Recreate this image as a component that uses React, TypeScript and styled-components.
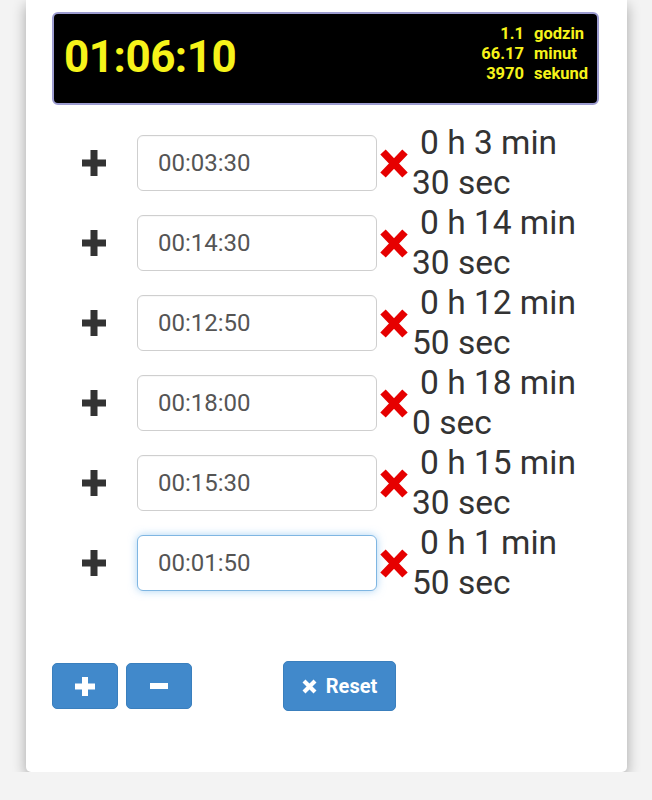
import React from "react";
import styled, { createGlobalStyle } from "styled-components";

const Global = createGlobalStyle`
  html, body { margin: 0; padding: 0; background: #f3f3f3; }
  body { font-family: Roboto, "Liberation Sans", Arial, sans-serif; }
  * { box-sizing: border-box; }
`;

const Card = styled.div`
  margin-left: 26px;
  width: 601px;
  height: 772px;
  background: #fff;
  border-radius: 0 0 5px 5px;
  box-shadow: 0 5px 14px rgba(0, 0, 0, 0.32);
  padding: 12px 0 0 0;
  display: flex;
  flex-direction: column;
`;

const Display = styled.div`
  margin-left: 26px;
  width: 547px;
  height: 93px;
  background: #000;
  border: 2px solid #9c9cd0;
  border-radius: 6px;
  display: flex;
  align-items: center;
  justify-content: space-between;
  padding: 0 9px 0 10px;
`;

const BigTime = styled.div`
  color: #f6f31a;
  font-size: 44px;
  font-weight: 700;
  letter-spacing: -0.5px;
  margin-bottom: 4px;
`;

const Stats = styled.div`
  display: grid;
  grid-template-columns: auto auto;
  column-gap: 10px;
  color: #f6f31a;
  font-size: 16.5px;
  font-weight: 700;
  line-height: 20px;
  margin-bottom: 10px;
`;

const Num = styled.span`
  text-align: right;
`;

const Rows = styled.div`
  margin-top: 18px;
  display: flex;
  flex-direction: column;
`;

const Row = styled.div`
  display: flex;
  align-items: center;
  height: 80px;
  padding-left: 56px;
`;

const PlusIcon = styled.svg`
  width: 24px;
  height: 26px;
  margin-right: 31px;
  flex: none;
`;

const TimeInput = styled.input<{ $focused?: boolean }>`
  width: 240px;
  height: 56px;
  border: 1px solid ${(p) => (p.$focused ? "#7fb6e2" : "#cfcfcf")};
  border-radius: 6px;
  padding: 0 0 0 20px;
  font-family: Roboto, "Liberation Sans", Arial, sans-serif;
  font-size: 24px;
  color: #555;
  background: #fff;
  outline: none;
  box-shadow: ${(p) =>
    p.$focused ? "0 0 9px rgba(102, 175, 233, 0.55)" : "inset 0 1px 1px rgba(0,0,0,0.03)"};
`;

const RemoveIcon = styled.svg`
  width: 28px;
  height: 30px;
  margin-left: 3px;
  flex: none;
`;

const Duration = styled.div`
  margin-left: 4px;
  font-size: 33.5px;
  line-height: 40px;
  color: #333;
  white-space: nowrap;
`;

const FirstLine = styled.div`
  padding-left: 8px;
`;

const Buttons = styled.div`
  margin-top: 58px;
  padding-left: 26px;
  display: flex;
  align-items: center;
`;

const BlueButton = styled.button<{ $w: number; $h: number }>`
  width: ${(p) => p.$w}px;
  height: ${(p) => p.$h}px;
  background: #4189cb;
  border: 1px solid #3a7fbd;
  border-radius: 5px;
  color: #fff;
  display: flex;
  align-items: center;
  justify-content: center;
  gap: 9px;
  padding: 0;
  font-family: Roboto, "Liberation Sans", Arial, sans-serif;
  font-size: 20px;
  font-weight: 700;
  cursor: pointer;
`;

const Spacer = styled.div<{ $w: number }>`
  width: ${(p) => p.$w}px;
`;

const Plus = () => (
  <PlusIcon viewBox="0 0 24 26">
    <rect x="8.5" y="0" width="7" height="26" fill="#333" />
    <rect x="0" y="9.5" width="24" height="7" fill="#333" />
  </PlusIcon>
);

const Remove = () => (
  <RemoveIcon viewBox="0 0 28 30">
    <path d="M3 4 L25 27 M25 4 L3 27" stroke="#e60000" strokeWidth="7.5" />
  </RemoveIcon>
);

const rows = [
  { v: "00:03:30", a: "0 h 3 min", b: "30 sec" },
  { v: "00:14:30", a: "0 h 14 min", b: "30 sec" },
  { v: "00:12:50", a: "0 h 12 min", b: "50 sec" },
  { v: "00:18:00", a: "0 h 18 min", b: "0 sec" },
  { v: "00:15:30", a: "0 h 15 min", b: "30 sec" },
  { v: "00:01:50", a: "0 h 1 min", b: "50 sec", focused: true },
];

export default function App() {
  return (
    <>
      <Global />
      <Card>
        <Display>
          <BigTime>01:06:10</BigTime>
          <Stats>
            <Num>1.1</Num>
            <span>godzin</span>
            <Num>66.17</Num>
            <span>minut</span>
            <Num>3970</Num>
            <span>sekund</span>
          </Stats>
        </Display>
        <Rows>
          {rows.map((r, i) => (
            <Row key={i}>
              <Plus />
              <TimeInput defaultValue={r.v} $focused={r.focused} readOnly />
              <Remove />
              <Duration>
                <FirstLine>{r.a}</FirstLine>
                <div>{r.b}</div>
              </Duration>
            </Row>
          ))}
        </Rows>
        <Buttons>
          <BlueButton $w={66} $h={46}>
            <svg width="20" height="19" viewBox="0 0 20 19">
              <rect x="7" y="0" width="6" height="19" fill="#fff" />
              <rect x="0" y="6.5" width="20" height="6" fill="#fff" />
            </svg>
          </BlueButton>
          <Spacer $w={8} />
          <BlueButton $w={66} $h={46}>
            <svg width="18" height="18" viewBox="0 0 18 18">
              <rect x="0" y="6" width="18" height="6" fill="#fff" />
            </svg>
          </BlueButton>
          <Spacer $w={91} />
          <BlueButton $w={113} $h={50}>
            <svg width="15" height="15" viewBox="0 0 15 15">
              <path d="M2 2 L13 13 M13 2 L2 13" stroke="#fff" strokeWidth="4.2" />
            </svg>
            Reset
          </BlueButton>
        </Buttons>
      </Card>
    </>
  );
}
